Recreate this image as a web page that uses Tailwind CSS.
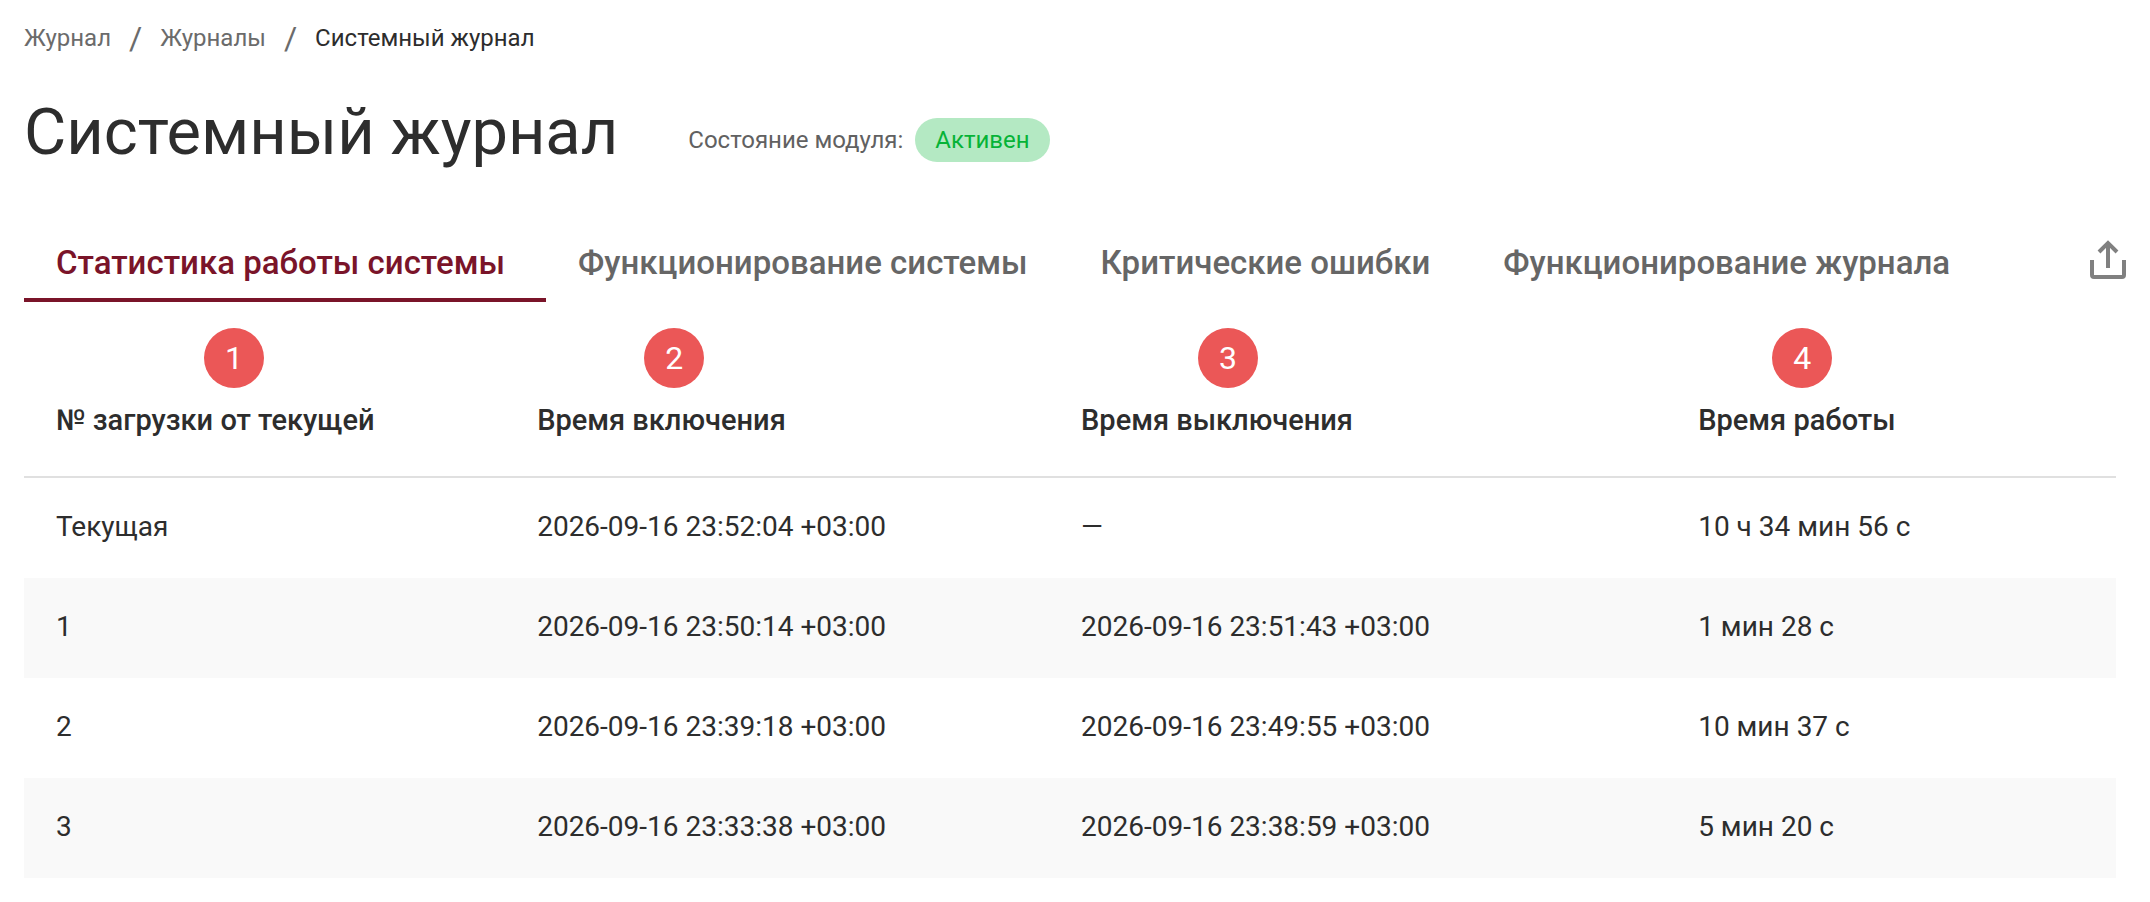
<!DOCTYPE html>
<html lang="ru">
<head>
    <meta charset="utf-8">
    <meta name="viewport" content="width=device-width, initial-scale=1.0">
    <title>Системный журнал</title>
    <script src="https://cdn.jsdelivr.net/npm/@tailwindcss/browser@4"></script>
</head>
<body class="min-h-screen bg-white pl-6 pt-5 font-[Roboto,sans-serif] text-[#2d2d2d]">
    <nav aria-label="Навигация" class="flex items-center gap-[18px] text-2xl leading-9">
        <a href="#" class="text-[#6b6b6b]">Журнал</a>
        <span class="text-[32px] leading-9 text-[#6b6b6b]">/</span>
        <a href="#" class="text-[#6b6b6b]">Журналы</a>
        <span class="text-[32px] leading-9 text-[#6b6b6b]">/</span>
        <span aria-current="page">Системный журнал</span>
    </nav>

    <header class="mt-[34px] flex items-center gap-[70px]">
        <h1 class="text-[65px] leading-[84px]">Системный журнал</h1>
        <div class="mt-4 flex items-center gap-3 text-2xl">
            <span class="text-[#616161]">Состояние модуля:</span>
            <span class="rounded-full bg-[#b4e9c3] px-5 leading-[44px] text-[#06b337]">Активен</span>
        </div>
    </header>

    <div class="mt-9 flex items-end justify-between pr-4">
        <div role="tablist" class="flex text-[33px] font-medium leading-10 text-[#666]">
            <button type="button" role="tab" aria-selected="true" class="border-b-4 border-[#7a1429] pl-8 pr-[41px] pt-[33px] pb-[15px] text-[#7a1429]">Статистика работы системы</button>
            <button type="button" role="tab" aria-selected="false" class="border-b-4 border-transparent pl-8 pr-[41px] pt-[33px] pb-[15px]">Функционирование системы</button>
            <button type="button" role="tab" aria-selected="false" class="border-b-4 border-transparent pl-8 pr-[41px] pt-[33px] pb-[15px]">Критические ошибки</button>
            <button type="button" role="tab" aria-selected="false" class="border-b-4 border-transparent pl-8 pr-[41px] pt-[33px] pb-[15px]">Функционирование журнала</button>
        </div>
        <button type="button" aria-label="Экспорт" class="mb-4 p-1">
            <svg class="size-11" viewBox="0 0 44 44" fill="none" stroke="#808080" stroke-width="4">
                <path d="M6 22v15a2 2 0 0 0 2 2h28a2 2 0 0 0 2-2V22" />
                <path d="M22 30V5M13 14l9-9 9 9" />
            </svg>
        </button>
    </div>

    <div class="pr-[34px]">
        <table class="w-full table-fixed text-left text-[28px] leading-9">
            <colgroup>
                <col class="w-[23%]">
                <col class="w-[26%]">
                <col class="w-[29.5%]">
                <col>
            </colgroup>
            <thead class="text-[29px]">
                <tr class="border-b-2 border-[#e0e0e0]">
                    <th scope="col" class="relative px-8 pt-[100px] pb-[38px] font-medium">
                        <span class="absolute left-[180px] top-[26px] flex size-[60px] items-center justify-center rounded-full bg-[#eb5757] text-[32px] font-normal text-white">1</span>
                        № загрузки от текущей
                    </th>
                    <th scope="col" class="relative px-8 pt-[100px] pb-[38px] font-medium">
                        <span class="absolute left-[139px] top-[26px] flex size-[60px] items-center justify-center rounded-full bg-[#eb5757] text-[32px] font-normal text-white">2</span>
                        Время включения
                    </th>
                    <th scope="col" class="relative px-8 pt-[100px] pb-[38px] font-medium">
                        <span class="absolute left-[149px] top-[26px] flex size-[60px] items-center justify-center rounded-full bg-[#eb5757] text-[32px] font-normal text-white">3</span>
                        Время выключения
                    </th>
                    <th scope="col" class="relative px-8 pt-[100px] pb-[38px] font-medium">
                        <span class="absolute left-[106px] top-[26px] flex size-[60px] items-center justify-center rounded-full bg-[#eb5757] text-[32px] font-normal text-white">4</span>
                        Время работы
                    </th>
                </tr>
            </thead>
            <tbody>
                <tr class="even:bg-[#f9f9f9]">
                    <td class="px-8 pt-[31px] pb-[33px]">Текущая</td>
                    <td class="px-8 pt-[31px] pb-[33px]">2026-09-16 23:52:04 +03:00</td>
                    <td class="px-8 pt-[31px] pb-[33px]">—</td>
                    <td class="px-8 pt-[31px] pb-[33px]">10 ч 34 мин 56 с</td>
                </tr>
                <tr class="even:bg-[#f9f9f9]">
                    <td class="px-8 pt-[31px] pb-[33px]">1</td>
                    <td class="px-8 pt-[31px] pb-[33px]">2026-09-16 23:50:14 +03:00</td>
                    <td class="px-8 pt-[31px] pb-[33px]">2026-09-16 23:51:43 +03:00</td>
                    <td class="px-8 pt-[31px] pb-[33px]">1 мин 28 с</td>
                </tr>
                <tr class="even:bg-[#f9f9f9]">
                    <td class="px-8 pt-[31px] pb-[33px]">2</td>
                    <td class="px-8 pt-[31px] pb-[33px]">2026-09-16 23:39:18 +03:00</td>
                    <td class="px-8 pt-[31px] pb-[33px]">2026-09-16 23:49:55 +03:00</td>
                    <td class="px-8 pt-[31px] pb-[33px]">10 мин 37 с</td>
                </tr>
                <tr class="even:bg-[#f9f9f9]">
                    <td class="px-8 pt-[31px] pb-[33px]">3</td>
                    <td class="px-8 pt-[31px] pb-[33px]">2026-09-16 23:33:38 +03:00</td>
                    <td class="px-8 pt-[31px] pb-[33px]">2026-09-16 23:38:59 +03:00</td>
                    <td class="px-8 pt-[31px] pb-[33px]">5 мин 20 с</td>
                </tr>
            </tbody>
        </table>
    </div>
</body>
</html>
